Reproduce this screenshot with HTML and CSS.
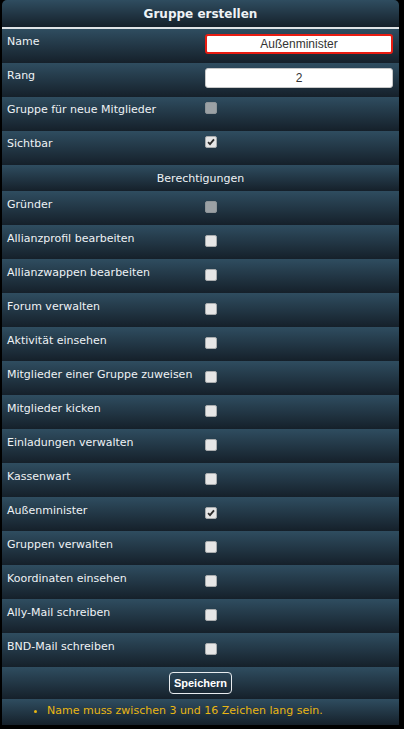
FILE: index.html
```html
<!DOCTYPE html>
<html>
<head lang="de">
    <meta charset="UTF-8">
    <title>Gruppe erstellen</title>
    <link rel="stylesheet" href="styles.css">
</head>
<body>
    <div class="panel">
        <div class="panelhead">Gruppe erstellen</div>

        <div class="row">
            <div class="label">Name</div>
            <div class="field"><input class="textbox error" type="text" value="Außenminister"></div>
        </div>
        <div class="row">
            <div class="label">Rang</div>
            <div class="field"><input class="textbox" type="text" value="2"></div>
        </div>
        <div class="row">
            <div class="label">Gruppe für neue Mitglieder</div>
            <div class="field"><span class="box disabled"></span></div>
        </div>
        <div class="row">
            <div class="label">Sichtbar</div>
            <div class="field"><span class="box checked"><svg viewBox="0 0 12 12"><path d="M2.5 6.2 L4.8 8.6 L9.6 2.8" /></svg></span></div>
        </div>

        <div class="subhead">Berechtigungen</div>

        <div class="rights">
            <div class="row">
                <div class="label">Gründer</div>
                <div class="field"><span class="box disabled"></span></div>
            </div>
            <div class="row">
                <div class="label">Allianzprofil bearbeiten</div>
                <div class="field"><span class="box"></span></div>
            </div>
            <div class="row">
                <div class="label">Allianzwappen bearbeiten</div>
                <div class="field"><span class="box"></span></div>
            </div>
            <div class="row">
                <div class="label">Forum verwalten</div>
                <div class="field"><span class="box"></span></div>
            </div>
            <div class="row">
                <div class="label">Aktivität einsehen</div>
                <div class="field"><span class="box"></span></div>
            </div>
            <div class="row">
                <div class="label">Mitglieder einer Gruppe zuweisen</div>
                <div class="field"><span class="box"></span></div>
            </div>
            <div class="row">
                <div class="label">Mitglieder kicken</div>
                <div class="field"><span class="box"></span></div>
            </div>
            <div class="row">
                <div class="label">Einladungen verwalten</div>
                <div class="field"><span class="box"></span></div>
            </div>
            <div class="row">
                <div class="label">Kassenwart</div>
                <div class="field"><span class="box"></span></div>
            </div>
            <div class="row">
                <div class="label">Außenminister</div>
                <div class="field"><span class="box checked"><svg viewBox="0 0 12 12"><path d="M2.5 6.2 L4.8 8.6 L9.6 2.8" /></svg></span></div>
            </div>
            <div class="row">
                <div class="label">Gruppen verwalten</div>
                <div class="field"><span class="box"></span></div>
            </div>
            <div class="row">
                <div class="label">Koordinaten einsehen</div>
                <div class="field"><span class="box"></span></div>
            </div>
            <div class="row">
                <div class="label">Ally-Mail schreiben</div>
                <div class="field"><span class="box"></span></div>
            </div>
            <div class="row">
                <div class="label">BND-Mail schreiben</div>
                <div class="field"><span class="box"></span></div>
            </div>
        </div>

        <div class="actions">
            <button class="button" type="button">Speichern</button>
        </div>

        <div class="messages">
            <ul>
                <li>Name muss zwischen 3 und 16 Zeichen lang sein.</li>
            </ul>
        </div>
    </div>
</body>
</html>
```

FILE: styles.css
```css
body {
    margin: 0;
    background-color: #000;
    font-family: "DejaVu Sans", Verdana, sans-serif;
    font-size: 11px;
    color: #eef2f5;
}
.panel {
    width: 397px;
    margin-left: 2px;
    border-radius: 5px 5px 0 0;
    overflow: hidden;
}
.panelhead,
.row,
.subhead,
.actions,
.messages {
    background: linear-gradient(#2f4d60, #15202a);
}
.panelhead {
    height: 27px;
    line-height: 28px;
    text-align: center;
    font-weight: bold;
    font-size: 12px;
    border-bottom: 2px solid #dfe3e6;
}
.row {
    display: grid;
    grid-template-columns: 203px 1fr;
    height: 34px;
}
.label {
    padding: 6px 0 0 5px;
}
.field {
    padding: 5px 6px 0 0;
}
.rights .label {
    padding-top: 7px;
}
.rights .field {
    padding-top: 10px;
}
.textbox {
    box-sizing: border-box;
    width: 100%;
    height: 20px;
    margin: 0;
    padding: 0 4px;
    border: 1px solid #c8c8c8;
    border-radius: 3px;
    background-color: #fff;
    text-align: center;
    font-family: "Liberation Sans", Arial, sans-serif;
    font-size: 12px;
    color: #333;
}
.textbox.error {
    border: 2px solid #e81c12;
}
.box {
    display: block;
    box-sizing: border-box;
    width: 12px;
    height: 12px;
    border: 1px solid #a9acae;
    border-radius: 2px;
    background-color: #e6e6e6;
}
.box.disabled {
    border-color: #8d9498;
    background-color: #9ba1a5;
}
.box svg {
    display: block;
    width: 10px;
    height: 10px;
}
.box svg path {
    fill: none;
    stroke: #2b2b2b;
    stroke-width: 2.2;
}
.subhead {
    height: 26px;
    line-height: 27px;
    text-align: center;
}
.actions {
    height: 32px;
    display: flex;
    justify-content: center;
    align-items: center;
}
.button {
    height: 22px;
    padding: 0 4px;
    border: 1px solid #e8ecef;
    border-radius: 4px;
    background: transparent;
    color: #fff;
    font-family: "Liberation Sans", Arial, sans-serif;
    font-weight: bold;
    font-size: 11px;
}
.messages {
    height: 26px;
}
.messages ul {
    margin: 0;
    padding: 5px 0 0 45px;
    color: #e9b613;
    font-family: "DejaVu Sans", sans-serif;
    font-size: 11px;
}
```
